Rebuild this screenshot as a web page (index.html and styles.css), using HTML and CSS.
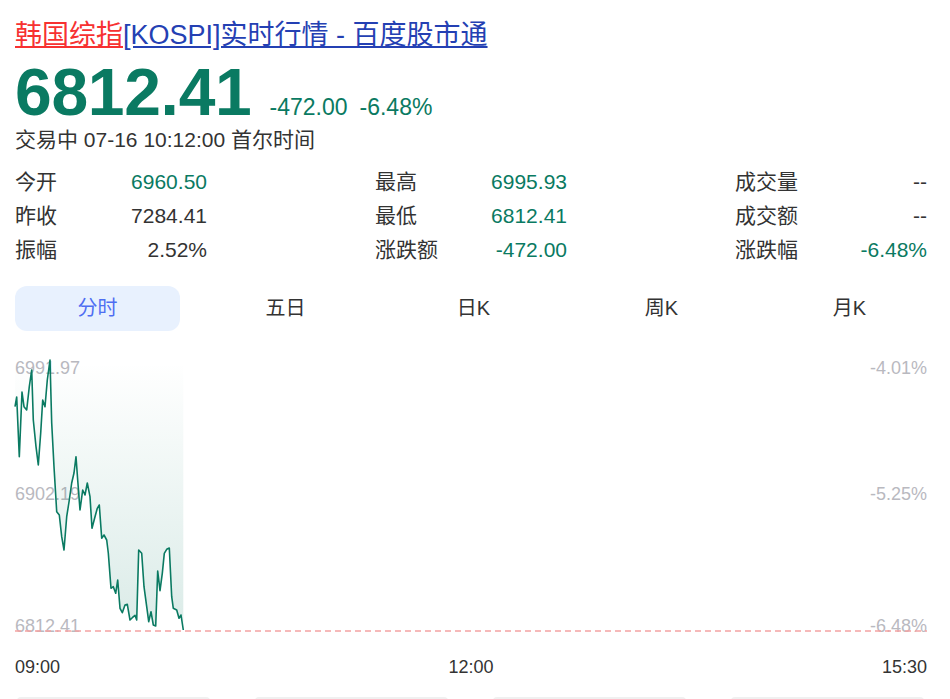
FILE: index.html
```html
<!DOCTYPE html>
<html lang="zh-CN">

<head>
  <meta charset="UTF-8">
  <meta name="viewport" content="width=device-width, initial-scale=1.0">
  <title>韩国综指[KOSPI]实时行情 - 百度股市通</title>
  <link rel="stylesheet" href="styles.css">
</head>

<body>
  <div class="page">
    <h1 class="title"><a class="red" href="#">韩国综指</a><a href="#">[KOSPI]实时行情 - 百度股市通</a></h1>

    <div class="price">
      <span class="last">6812.41</span>
      <span class="change">-472.00</span>
      <span class="change">-6.48%</span>
    </div>
    <div class="status">交易中 07-16 10:12:00 首尔时间</div>

    <div class="stats">
      <div class="cell"><span>今开</span><span class="down">6960.50</span></div>
      <div class="cell"><span>最高</span><span class="down">6995.93</span></div>
      <div class="cell"><span>成交量</span><span>--</span></div>
      <div class="cell"><span>昨收</span><span>7284.41</span></div>
      <div class="cell"><span>最低</span><span class="down">6812.41</span></div>
      <div class="cell"><span>成交额</span><span>--</span></div>
      <div class="cell"><span>振幅</span><span>2.52%</span></div>
      <div class="cell"><span>涨跌额</span><span class="down">-472.00</span></div>
      <div class="cell"><span>涨跌幅</span><span class="down">-6.48%</span></div>
    </div>

    <div class="tabs">
      <div class="tab active">分时</div>
      <div class="tab">五日</div>
      <div class="tab">日K</div>
      <div class="tab">周K</div>
      <div class="tab">月K</div>
    </div>
  </div>

  <!-- 分时图，viewBox 用页面坐标 -->
  <svg class="chart" width="950" height="300" viewBox="0 345 950 300">
    <defs>
      <linearGradient id="areaFill" x1="0" y1="362" x2="0" y2="631" gradientUnits="userSpaceOnUse">
        <stop offset="0" stop-color="#0a7a62" stop-opacity="0" />
        <stop offset="1" stop-color="#0a7a62" stop-opacity="0.15" />
      </linearGradient>
    </defs>
    <g class="axis">
      <text x="15" y="374">6991.97</text>
      <text x="15" y="500">6902.19</text>
      <text x="15" y="632">6812.41</text>
      <text x="927" y="374" text-anchor="end">-4.01%</text>
      <text x="927" y="500" text-anchor="end">-5.25%</text>
      <text x="927" y="632" text-anchor="end">-6.48%</text>
    </g>
    <polygon fill="url(#areaFill)" points="15,362 15,406.7 16.7,397 19.3,456.7 22,392 24,406.7 26.7,410 29.3,386.7 31.7,370 33.3,420 36,446.7 38.3,465 40.7,433 42.7,400 45,406.7 47.3,380 50,360 51.7,423 54,466.7 56.7,511.7 59.3,515 61.7,536.7 64,550 66.7,516.7 69.3,500 71.7,483 74,473 76,456.7 77.7,480 80,510 82.7,490 85,495 87.3,483 90,496.7 92,528.3 95,516.7 97.3,508.3 99.3,505 101.7,538.3 104,535 106.7,540 108.3,553 111,588.3 113.3,586.7 115.7,593.3 117.7,580 120,608.3 122.3,612.7 125,605 127.3,604.3 130,620 132.3,617.7 135,615.3 136.7,620 138.7,550 141.7,553.3 144,586.7 146.7,606.7 148.7,621.7 151,611.7 153.3,625 155.7,626 157.7,571 160,590.7 162.3,573.3 164.3,553.3 166.7,549.3 169.3,548 171.7,596.7 173.3,608.3 176.7,610 179,618.3 181,615 183.3,630 183.3,362" />
    <line class="base" x1="15" y1="631" x2="927" y2="631" />
    <polyline class="line" points="15,406.7 16.7,397 19.3,456.7 22,392 24,406.7 26.7,410 29.3,386.7 31.7,370 33.3,420 36,446.7 38.3,465 40.7,433 42.7,400 45,406.7 47.3,380 50,360 51.7,423 54,466.7 56.7,511.7 59.3,515 61.7,536.7 64,550 66.7,516.7 69.3,500 71.7,483 74,473 76,456.7 77.7,480 80,510 82.7,490 85,495 87.3,483 90,496.7 92,528.3 95,516.7 97.3,508.3 99.3,505 101.7,538.3 104,535 106.7,540 108.3,553 111,588.3 113.3,586.7 115.7,593.3 117.7,580 120,608.3 122.3,612.7 125,605 127.3,604.3 130,620 132.3,617.7 135,615.3 136.7,620 138.7,550 141.7,553.3 144,586.7 146.7,606.7 148.7,621.7 151,611.7 153.3,625 155.7,626 157.7,571 160,590.7 162.3,573.3 164.3,553.3 166.7,549.3 169.3,548 171.7,596.7 173.3,608.3 176.7,610 179,618.3 181,615 183.3,630" />
  </svg>

  <div class="page">
    <div class="times">
      <span>09:00</span>
      <span>12:00</span>
      <span>15:30</span>
    </div>
  </div>

  <div class="cards">
    <div class="card"></div>
    <div class="card"></div>
    <div class="card"></div>
    <div class="card"></div>
  </div>
</body>

</html>
```

FILE: styles.css
```css
html,
body {
  margin: 0;
  padding: 0;
  background-color: #fff;
  overflow: hidden;
}

body {
  font-family: "Liberation Sans", Arial, "Noto Sans CJK SC", sans-serif;
  color: #333;
}

.page {
  width: 912px;
  margin-left: 15px;
}

.title {
  margin: 0;
  padding-top: 17px;
  font-size: 27px;
  font-weight: normal;
  line-height: 36px;
  white-space: nowrap;
}

.title a {
  color: #2440b3;
  text-decoration: underline;
}

.title a.red {
  color: #f73131;
}

.price {
  display: flex;
  align-items: baseline;
  margin-top: 6px;
  height: 66px;
  line-height: 66px;
  color: #0a7a62;
}

.price .last {
  font-size: 66px;
  font-weight: bold;
  letter-spacing: -0.3px;
  margin-right: 18px;
}

.price .change {
  font-size: 23px;
  margin-right: 12px;
}

.status {
  margin-top: 3px;
  font-size: 21px;
  line-height: 24px;
}

.stats {
  display: grid;
  grid-template-columns: repeat(3, 192px);
  column-gap: 168px;
  margin-top: 13px;
}

.stats .cell {
  display: flex;
  justify-content: space-between;
  height: 34px;
  line-height: 34px;
  font-size: 21px;
}

.stats .down {
  color: #0a7a62;
}

.tabs {
  display: grid;
  grid-template-columns: repeat(5, 165px);
  column-gap: 23px;
  margin-top: 19px;
}

.tab {
  height: 45px;
  line-height: 45px;
  text-align: center;
  font-size: 20px;
  border-radius: 12px;
}

.tab.active {
  background-color: #e8f1fe;
  color: #4e6ef2;
}

.chart {
  display: block;
  margin-top: 14px;
}

.chart .axis text {
  font-family: "Liberation Sans", Arial, sans-serif;
  font-size: 18px;
  fill: #b9b9bf;
}

.chart .base {
  stroke: #f4a3a3;
  stroke-width: 1.5;
  stroke-dasharray: 6 4;
}

.chart .line {
  fill: none;
  stroke: #0a7a62;
  stroke-width: 1.6;
  stroke-linejoin: round;
}

.times {
  display: flex;
  justify-content: space-between;
  margin-top: 12px;
  font-size: 18px;
  line-height: 20px;
}

.cards {
  display: grid;
  grid-template-columns: repeat(4, 193px);
  column-gap: 45px;
  margin: 20px 0 0 17px;
}

.card {
  height: 20px;
  border-top: 2px solid #f0f0f0;
  border-radius: 4px;
}
```
